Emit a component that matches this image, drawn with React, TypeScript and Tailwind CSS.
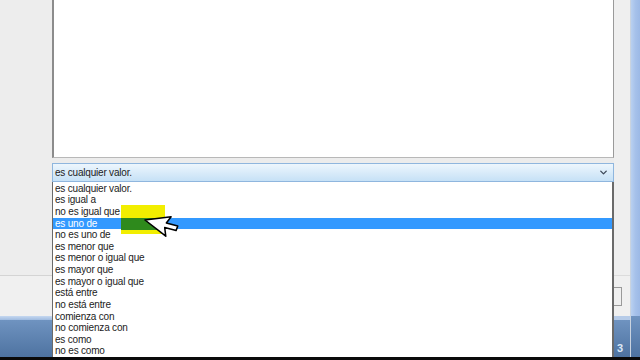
import { ChevronDown } from 'lucide-react';

const options = [
  'es cualquier valor.',
  'es igual a',
  'no es igual que',
  'es uno de',
  'no es uno de',
  'es menor que',
  'es menor o igual que',
  'es mayor que',
  'es mayor o igual que',
  'está entre',
  'no está entre',
  'comienza con',
  'no comienza con',
  'es como',
  'no es como',
];

export default function App() {
  const selected = 3;

  return (
    <div className="w-[640px] h-[360px] overflow-hidden bg-[#ececec] flex flex-col relative" style={{ fontFamily: '"Liberation Sans", Arial, sans-serif' }}>
      <div className="flex h-[357px]">
        {/* left side of the window */}
        <div className="w-[52px] flex flex-col">
          <div className="h-[276px] bg-[#ededed] border-b border-[#d4d4d4]" />
          <div className="h-[40px] bg-[#f0f0f0]" />
          <div className="h-[4px] bg-gradient-to-b from-[#c6d8f0] to-[#9fbbe0]" />
          <div className="flex-1 bg-gradient-to-b from-[#6f93c0] to-[#4e73a1]" />
        </div>

        {/* center: textarea, combo and open list */}
        <div className="w-[562px] flex flex-col">
          <div className="h-[158px] bg-white border-l-2 border-r border-b border-l-[#8c8c8c] border-r-[#9a9a9a] border-b-[#b8b8b8]" />
          <div className="h-[5px]" />
          <div className="h-[19px] border border-[#8fb6de] bg-gradient-to-b from-[#edf6fd] to-[#c6e1f6] flex items-center justify-between pl-[2px] pr-[4px]">
            <span className="text-[10px] tracking-[-0.2px] text-[#1c1c1c] leading-none pt-px">es cualquier valor.</span>
            <ChevronDown size={11} strokeWidth={3} className="text-[#3e4a5a]" />
          </div>
          <div className="flex-1 bg-white border-l border-r-2 border-l-[#6a6a6a] border-r-[#6a6a6a] pt-px">
            {options.map((o, i) => (
              <div
                key={o}
                className={`h-[11.64px] leading-[12px] pl-[2px] text-[10px] tracking-[-0.2px] whitespace-nowrap ${i === selected ? 'bg-[#3399ff] text-white' : 'text-[#1c1c1c]'}`}
              >
                {o}
              </div>
            ))}
          </div>
        </div>

        {/* right side of the window */}
        <div className="flex-1 flex">
          <div className="w-[16px] flex flex-col">
            <div className="h-[276px] bg-[#efefef] border-b border-[#dcdcdc]" />
            <div className="h-[40px] bg-[#f0f0f0] pt-[11px]">
              <div className="h-[19px] w-[8px] border border-l-0 border-[#9a9a9a]" />
            </div>
            <div className="h-[4px] bg-[#b6cbe8]" />
            <div className="flex-1 bg-gradient-to-b from-[#6f93c0] to-[#4e73a1] flex items-end pl-[3px] pb-[3px]">
              <span className="text-[11px] font-bold text-[#dce8f6] leading-none">3</span>
            </div>
          </div>
          <div className="w-px bg-[#c9d3df]" />
          <div className="flex-1 flex flex-col">
            <div className="h-[316px] bg-gradient-to-r from-[#b9d0f0] via-[#a6c1ea] to-[#9cb9e6]" />
            <div className="flex-1 bg-gradient-to-b from-[#6f93c0] to-[#4e73a1]" />
          </div>
        </div>
      </div>
      <div className="h-[3px] bg-[#0a0a0a]" />

      {/* cursor highlight and pointer over the list */}
      <div className="absolute left-[121px] top-[205px] w-[44px] h-[29px] bg-[#f2ee00]" />
      <div className="absolute left-[121px] top-[218px] w-[44px] h-[11.6px] bg-[#2e8a1c]" />
      <svg className="absolute left-[138px] top-[200px]" width="42" height="40" viewBox="0 0 42 40">
        <g transform="translate(7 20) rotate(-52) scale(1.55)">
          <path d="M0 0 L0 17 L4 13 L7 20 L10 19 L7 12 L12 12 Z" fill="white" stroke="black" strokeWidth="1" strokeLinejoin="round" />
        </g>
      </svg>
    </div>
  );
}
